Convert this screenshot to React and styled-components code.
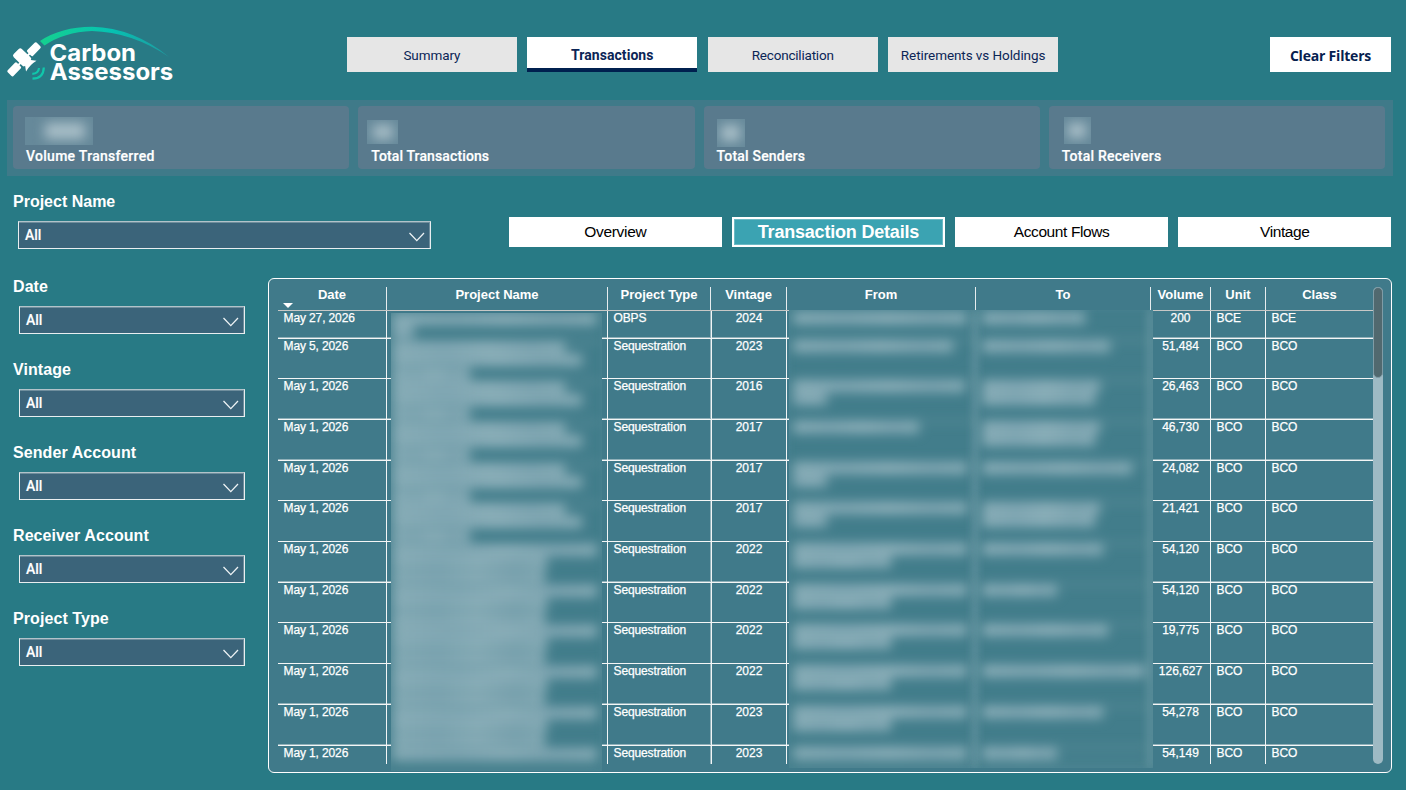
import React from 'react';
import styled, { createGlobalStyle } from 'styled-components';

const GlobalStyle = createGlobalStyle`
	* { box-sizing: border-box; }
	body {
		margin: 0;
		background: #287a85;
		font-family: "Liberation Sans", Arial, sans-serif;
		color: #fff;
	}
`

const Page = styled.div`
	width: 1406px;
	height: 790px;
	overflow: hidden;
	background: #287a85;
`

const Header = styled.header`
	display: flex;
	align-items: flex-start;
	height: 100px;
	padding: 0 15px 0 0;
`

const Logo = styled.svg`
	display: block;
	width: 190px;
	height: 100px;
	flex: none;
`

const Tabs = styled.nav`
	display: grid;
	grid-template-columns: repeat(4, 1fr);
	gap: 10.6px;
	width: 711px;
	margin: 37px auto 0 157px;
`

const Tab = styled.button`
	height: 35px;
	padding: ${p => p.$active ? '4px 0 0' : '1px 0 0'};
	border: 0;
	border-bottom: ${p => p.$active ? '4px solid #00204f' : '0'};
	background: ${p => p.$active ? '#fff' : '#e6e6e6'};
	color: #0b2556;
	font-family: Roboto, sans-serif;
	font-size: ${p => p.$active ? 14 : 13.5}px;
	font-weight: ${p => p.$active ? 700 : 400};
	letter-spacing: ${p => p.$spacing || 0}px;
	white-space: nowrap;
`

const ClearButton = styled.button`
	width: 121px;
	height: 35px;
	margin-top: 37px;
	padding: 2px 0 0;
	border: 0;
	background: #fff;
	color: #06204f;
	font: 700 14px "Open Sans", sans-serif;
	letter-spacing: -0.2px;
`

const Kpis = styled.section`
	display: grid;
	grid-template-columns: repeat(4, 1fr);
	gap: 9px;
	height: 76px;
	margin: 0 13px 0 7px;
	padding: 6px 8px 7px 6px;
	background: #3f7a89;
`

const Kpi = styled.div`
	display: flex;
	flex-direction: column;
	justify-content: flex-end;
	padding: 0 12px 5px 13px;
	border-radius: 4px;
	background: #597a8d;
`

const KpiMask = styled.div`
	display: flex;
	align-items: center;
	justify-content: ${p => p.$end ? 'flex-end' : 'center'};
	width: ${p => p.$w}px;
	height: ${p => p.$h}px;
	margin: 0 0 ${p => p.$gap}px ${p => p.$left}px;
	padding-right: ${p => p.$end ? 8 : 0}px;
	overflow: hidden;
	background: #66899a;
`

const KpiBlob = styled.span`
	width: 66%;
	height: 58%;
	background: #a9bfc8;
	filter: blur(6px);
`

const KpiLabel = styled.div`
	font: 500 14px/16px Roboto, sans-serif;
	letter-spacing: ${p => p.$spacing}px;
	-webkit-text-stroke: 0.2px #fff;
`

const Controls = styled.section`
	display: flex;
	height: 102px;
	padding-right: 15px;
`

const FilterBox = styled.div`
	width: ${p => p.$w}px;
	height: ${p => p.$h}px;
	padding: ${p => p.$top}px 0 0 13px;
	flex: none;
`

const FilterLabel = styled.div`
	font-size: 16px;
	line-height: 18px;
	font-weight: 700;
	letter-spacing: ${p => p.$spacing || 0}px;
`

const Select = styled.div`
	display: flex;
	align-items: center;
	justify-content: space-between;
	width: ${p => p.$w}px;
	height: 28px;
	margin: 10px 0 0 ${p => p.$left}px;
	padding: 0 4px 0 6px;
	border: 1px solid #e9eef0;
	border-top-color: #b2c3ca;
	background: #3b647a;
	box-shadow: inset -1px 1px 0 #6f8e9d;
	font: 500 14px Roboto, sans-serif;
	-webkit-text-stroke: 0.15px #fff;
`

const Chevron = styled.svg`
	width: 18px;
	height: 12px;
	margin-top: 3px;
	fill: none;
	stroke: #eef3f5;
	stroke-width: 1.3;
`

const SubTabs = styled.nav`
	display: grid;
	grid-template-columns: repeat(4, 1fr);
	gap: 10.6px;
	width: 882px;
	margin: 41px 0 0 auto;
`

const SubTab = styled.button`
	height: 30px;
	padding: 0;
	border: ${p => p.$active ? '2px solid #fff' : '0'};
	background: ${p => p.$active ? '#3ba3b2' : '#fff'};
	color: ${p => p.$active ? '#fff' : '#000'};
	box-shadow: ${p => p.$active ? 'inset 0 0 0 1px #6cbac5' : 'none'};
	font-family: "Liberation Sans", Arial, sans-serif;
	font-size: ${p => p.$active ? 18 : 15.5}px;
	font-weight: ${p => p.$active ? 700 : 400};
	letter-spacing: ${p => p.$spacing}px;
`

const Main = styled.main`
	display: flex;
	height: 512px;
`

const Sidebar = styled.aside`
	width: 268px;
	flex: none;
`

const TablePanel = styled.section`
	position: relative;
	display: flex;
	width: 1124px;
	height: 495px;
	padding: 8px 8px 8px 9px;
	border: 1px solid #fff;
	border-radius: 6px;
	background: #407a8a;
	overflow: hidden;
`

const Table = styled.div`
	width: 1095px;
	flex: none;
`

const HeadRow = styled.div`
	display: grid;
	grid-template-columns: ${p => p.$cols};
	height: 24px;
	border-bottom: 1px solid #c9c8c6;
`

const HeadCell = styled.div`
	position: relative;
	border-right: ${p => p.$last ? '0' : '1px solid #e6ecee'};
	font-size: 13px;
	line-height: 15px;
	font-weight: 700;
	text-align: center;
	white-space: nowrap;
`

const SortMark = styled.span`
	position: absolute;
	left: 5px;
	bottom: 2px;
	border: 5px solid transparent;
	border-top-color: #fff;
	border-bottom: 0;
`

const BodyRow = styled.div`
	display: grid;
	grid-template-columns: ${p => p.$cols};
	height: ${p => p.$h}px;
	border-bottom: ${p => p.$last ? '0' : '1px solid #f4f6f6'};
	box-shadow: ${p => p.$thick ? 'inset 0 -1px 0 #8fb0b9' : 'none'};
`

const Cell = styled.div`
	padding: 0 ${p => p.$center ? 0 : 5.5}px;
	border-right: ${p => p.$last ? '0' : '1px solid #f1f5f6'};
	box-shadow: ${p => p.$thick ? 'inset -1px 0 0 #8fb0b9' : 'none'};
	font-size: 12px;
	line-height: 14px;
	letter-spacing: ${p => p.$center ? 0 : -0.12}px;
	text-align: ${p => p.$center ? 'center' : 'left'};
	-webkit-text-stroke: 0.25px #fff;
`

const Track = styled.div`
	width: 10px;
	height: 477px;
	border-radius: 5px;
	background: #9ebac4;
`

const Thumb = styled.div`
	height: 91px;
	border: 1px solid #7f9ca6;
	border-radius: 5px;
	background: #51696f;
`

const Mask = styled.div`
	position: absolute;
	left: ${p => p.$left}px;
	top: ${p => p.$top}px;
	display: flex;
	width: ${p => p.$w}px;
	height: 458px;
	overflow: hidden;
	background: #427d8b;
	box-shadow: inset 0 0 6px #4a8391;
`

const MaskColumn = styled.div`
	width: ${p => p.$w}px;
	flex: none;
	padding: ${p => p.$pad};
	filter: blur(6px);
`

const MaskRow = styled.div`
	height: ${p => p.$h}px;
	box-shadow: 0 1px 0 #8fb0b9;
`

const MaskLine = styled.div`
	height: 12px;
	margin-bottom: 1.3px;
	width: ${p => p.$w}px;
	background: linear-gradient(90deg, #8db0ba, #84a9b5 30%, #8fb1bb 55%, #82a7b3 80%, #8aaeb8);
`

const MaskEdge = styled.div`
	width: 2px;
	flex: none;
	background: #a3c0c8;
	filter: blur(4px);
`

const HEAD_COLS = '109px 221px 103px 76px 189px 175px 60px 55px 107px'
const BODY_COLS = '109px 221px 104px 75px 189px 175px 60px 55px 107px'
const ROW_HEIGHTS = [28, 40, 41, 41, 40, 41, 41, 40, 41, 41, 41, 18]
const THICK_LINES = [0, 2, 3, 6, 9, 10]

const columns = ['Date', 'Project Name', 'Project Type', 'Vintage', 'From', 'To', 'Volume', 'Unit', 'Class']

const rows = [
	['May 27, 2026', 'OBPS', '2024', '200', 'BCE'],
	['May 5, 2026', 'Sequestration', '2023', '51,484', 'BCO'],
	['May 1, 2026', 'Sequestration', '2016', '26,463', 'BCO'],
	['May 1, 2026', 'Sequestration', '2017', '46,730', 'BCO'],
	['May 1, 2026', 'Sequestration', '2017', '24,082', 'BCO'],
	['May 1, 2026', 'Sequestration', '2017', '21,421', 'BCO'],
	['May 1, 2026', 'Sequestration', '2022', '54,120', 'BCO'],
	['May 1, 2026', 'Sequestration', '2022', '54,120', 'BCO'],
	['May 1, 2026', 'Sequestration', '2022', '19,775', 'BCO'],
	['May 1, 2026', 'Sequestration', '2022', '126,627', 'BCO'],
	['May 1, 2026', 'Sequestration', '2023', '54,278', 'BCO'],
	['May 1, 2026', 'Sequestration', '2023', '54,149', 'BCO'],
]

// line widths of the hidden names and accounts, row by row
const short = [173, 190, 78]
const long = [205, 155, 153]
const hiddenNames = [[205, 22], short, short, short, short, short, long, long, long, long, long, [205]]
const hiddenFrom = [
	[174], [160], [172, 34], [126], [174, 34], [174, 34],
	[174, 98], [174, 98], [174, 98], [174, 98], [174, 98], [174],
]
const hiddenTo = [
	[103], [128], [118, 113], [118, 113], [150], [118, 113],
	[121], [75], [126], [163], [121], [75],
]

const filters = ['Date', 'Vintage', 'Sender Account', 'Receiver Account', 'Project Type']

const BrandLogo = () => {
	return (
		<Logo viewBox="0 0 190 100">
			<defs>
				<linearGradient id="arc" x1="0" x2="1">
					<stop offset="0" stopColor="#15d18f" />
					<stop offset="0.55" stopColor="#06c2b2" />
					<stop offset="1" stopColor="#1e9aa0" />
				</linearGradient>
			</defs>
			<path d="M40 41 Q61 27 92 26.800 Q134 28 169 57 Q132 32 92 31 Q64 32 44.500 45.500 Z" fill="url(#arc)" />
			<g fill="#fff" transform="translate(24.100 59.200) rotate(-45.800)">
				<rect x="-5.800" y="-11" width="11.600" height="16.500" rx="2.200" />
				<rect x="7.400" y="-4" width="13.200" height="8" rx="1.400" />
				<rect x="-20.800" y="-4" width="13.200" height="8" rx="1.400" />
				<rect x="-9" y="-1" width="18" height="2" />
				<path d="M-3 4h6l4.500 6q-7.500-2-15 0z" />
			</g>
			<g fill="none" stroke="#10c7ab" strokeWidth="2.200">
				<path d="M39 68 Q38.500 73.500 32.300 73.800" />
				<path d="M43.800 67.500 Q43.500 78.500 32.500 78.700" />
			</g>
			<g fill="#fff" fontFamily="Inter, sans-serif" fontWeight="700" fontSize="22.500">
				<text x="49.500" y="60.500" textLength="86.500" lengthAdjust="spacingAndGlyphs">Carbon</text>
				<text x="49.800" y="80.300" textLength="123.500" lengthAdjust="spacingAndGlyphs">Assessors</text>
			</g>
		</Logo>
	);
}

const Dropdown = ({ width, left }) => {
	return (
		<Select $w={width} $left={left}>
			<span>All</span>
			<Chevron viewBox="0 0 18 12">
				<path d="M1.500 2l7.300 7.600L16 2" />
			</Chevron>
		</Select>
	);
}

const HiddenColumn = ({ lines, width, pad }) => {
	return (
		<MaskColumn $w={width} $pad={pad}>
			{lines.map((row, i) => (
				<MaskRow key={i} $h={ROW_HEIGHTS[i]}>
					{row.map((w, j) => <MaskLine key={j} $w={w} />)}
				</MaskRow>
			))}
		</MaskColumn>
	);
}

const App = () => {
	return (
		<Page>
			<GlobalStyle />
			<Header>
				<BrandLogo />
				<Tabs>
					<Tab $spacing={-0.1}>Summary</Tab>
					<Tab $active $spacing={0.05}>Transactions</Tab>
					<Tab $spacing={-0.2}>Reconciliation</Tab>
					<Tab $spacing={-0.08}>Retirements vs Holdings</Tab>
				</Tabs>
				<ClearButton>Clear Filters</ClearButton>
			</Header>
			<Kpis>
				<Kpi>
					<KpiMask $w={68} $h={28} $left={-1} $gap={3} $end><KpiBlob /></KpiMask>
					<KpiLabel $spacing={0.28}>Volume Transferred</KpiLabel>
				</Kpi>
				<Kpi>
					<KpiMask $w={31} $h={24} $left={-4} $gap={4}><KpiBlob /></KpiMask>
					<KpiLabel $spacing={0.12}>Total Transactions</KpiLabel>
				</Kpi>
				<Kpi>
					<KpiMask $w={28} $h={28} $left={0} $gap={1}><KpiBlob /></KpiMask>
					<KpiLabel $spacing={0.2}>Total Senders</KpiLabel>
				</Kpi>
				<Kpi>
					<KpiMask $w={27} $h={27} $left={2} $gap={4}><KpiBlob /></KpiMask>
					<KpiLabel $spacing={0.24}>Total Receivers</KpiLabel>
				</Kpi>
			</Kpis>
			<Controls>
				<FilterBox $w={440} $h={102} $top={17}>
					<FilterLabel>Project Name</FilterLabel>
					<Dropdown width={413} left={5} />
				</FilterBox>
				<SubTabs>
					<SubTab $spacing={-0.3}>Overview</SubTab>
					<SubTab $active $spacing={-0.2}>Transaction Details</SubTab>
					<SubTab $spacing={-0.4}>Account Flows</SubTab>
					<SubTab $spacing={-0.4}>Vintage</SubTab>
				</SubTabs>
			</Controls>
			<Main>
				<Sidebar>
					{filters.map(name => (
						<FilterBox key={name} $w={268} $h={83} $top={0}>
							<FilterLabel $spacing={0.08}>{name}</FilterLabel>
							<Dropdown width={226} left={6} />
						</FilterBox>
					))}
				</Sidebar>
				<TablePanel>
					<Table>
						<HeadRow $cols={HEAD_COLS}>
							{columns.map((name, i) => (
								<HeadCell key={name} $last={i === columns.length - 1}>
									{name}
									{i === 0 && <SortMark />}
								</HeadCell>
							))}
						</HeadRow>
						{rows.map(([date, type, vintage, volume, unit], i) => (
							<BodyRow
								key={i}
								$cols={BODY_COLS}
								$h={ROW_HEIGHTS[i]}
								$thick={THICK_LINES.includes(i)}
								$last={i === rows.length - 1}
							>
								<Cell>{date}</Cell>
								<Cell />
								<Cell $thick>{type}</Cell>
								<Cell $center>{vintage}</Cell>
								<Cell />
								<Cell />
								<Cell $center>{volume}</Cell>
								<Cell>{unit}</Cell>
								<Cell $last>{unit}</Cell>
							</BodyRow>
						))}
					</Table>
					<Track>
						<Thumb />
					</Track>
					<Mask $left={122} $top={34} $w={211}>
						<HiddenColumn lines={hiddenNames} width={211} pad="0 0 0 1px" />
					</Mask>
					<Mask $left={520} $top={31} $w={364}>
						<HiddenColumn lines={hiddenFrom} width={185} pad="2px 0 0 4px" />
						<MaskEdge />
						<HiddenColumn lines={hiddenTo} width={173} pad="2px 0 0 6px" />
						<MaskEdge />
					</Mask>
				</TablePanel>
			</Main>
		</Page>
	);
}

export default App;
